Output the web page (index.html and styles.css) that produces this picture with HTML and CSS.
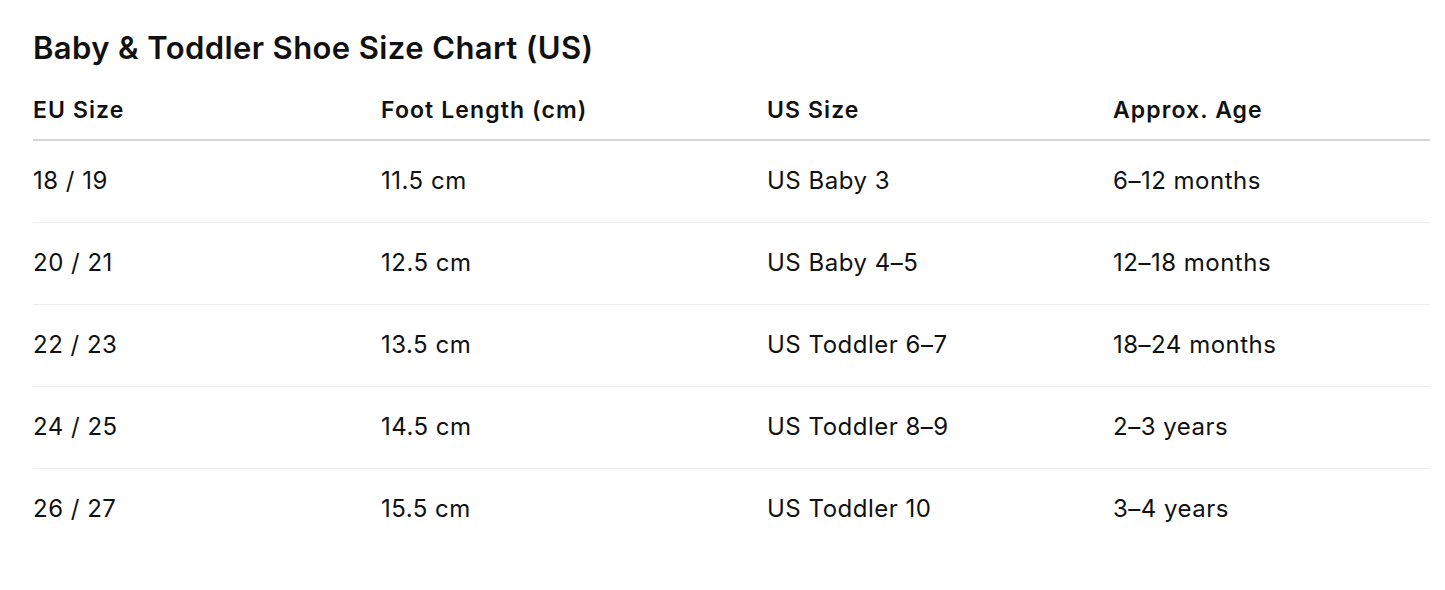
FILE: index.html
```html
<!DOCTYPE html>
<html lang="en">
<head>
<meta charset="utf-8">
<title>Baby &amp; Toddler Shoe Size Chart (US)</title>
<link rel="stylesheet" href="styles.css">
</head>
<body>
<main class="page">
  <h2 class="title">Baby &amp; Toddler Shoe Size Chart (US)</h2>
  <table class="chart">
    <colgroup>
      <col class="c1"><col class="c2"><col class="c3"><col class="c4">
    </colgroup>
    <thead>
      <tr><th>EU Size</th><th>Foot Length (cm)</th><th>US Size</th><th>Approx. Age</th></tr>
    </thead>
    <tbody>
      <tr><td>18 / 19</td><td>11.5 cm</td><td>US Baby 3</td><td>6–12 months</td></tr>
      <tr><td>20 / 21</td><td>12.5 cm</td><td>US Baby 4–5</td><td>12–18 months</td></tr>
      <tr><td>22 / 23</td><td>13.5 cm</td><td>US Toddler 6–7</td><td>18–24 months</td></tr>
      <tr><td>24 / 25</td><td>14.5 cm</td><td>US Toddler 8–9</td><td>2–3 years</td></tr>
      <tr><td>26 / 27</td><td>15.5 cm</td><td>US Toddler 10</td><td>3–4 years</td></tr>
    </tbody>
  </table>
</main>
</body>
</html>
```

FILE: styles.css
```css
html, body {
  margin: 0;
  padding: 0;
  background: #ffffff;
}

body {
  font-family: Inter, "Noto Sans", "Liberation Sans", sans-serif;
  color: #111111;
}

.page {
  padding: 30px 15px 0 33px;
}

.title {
  margin: 0 0 15px 0;
  font-size: 31px;
  line-height: 36px;
  font-weight: 600;
  letter-spacing: 0.4px;
}

.chart {
  width: 1397px;
  border-collapse: collapse;
  table-layout: fixed;
}

.c1 { width: 348px; }
.c2 { width: 386px; }
.c3 { width: 346px; }
.c4 { width: 317px; }

.chart th,
.chart td {
  text-align: left;
  padding: 0;
  line-height: 28px;
}

.chart th {
  font-size: 23px;
  font-weight: 600;
  letter-spacing: 1.1px;
  padding: 15px 0 15px 0;
  border-bottom: 2px solid #d6d6d6;
}

.chart td {
  font-size: 24px;
  font-weight: 400;
  letter-spacing: 0.5px;
  padding: 26px 0 27px 0;
  border-bottom: 1px solid #ececec;
}

.chart tbody tr:last-child td {
  border-bottom: none;
}
```
